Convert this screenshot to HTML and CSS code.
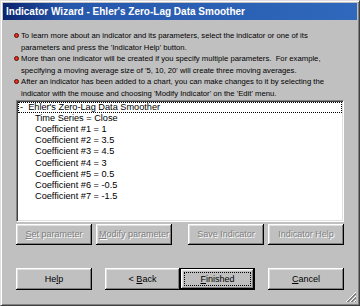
FILE: index.html
```html
<!DOCTYPE html>
<html lang="en">
<head>
    <meta charset="UTF-8">
    <meta name="viewport" content="width=device-width, initial-scale=1.0">
    <title>Indicator Wizard</title>
    <link rel="stylesheet" href="styles.css">
</head>
<body>
    <div class="window">
        <div class="titlebar">Indicator Wizard - Ehler's Zero-Lag Data Smoother</div>

        <div class="content">
            <ul class="notes">
                <li><span class="dot"></span><span>To learn more about an indicator and its parameters, select the indicator or one of its<br>parameters and press the 'Indicator Help' button.</span></li>
                <li><span class="dot"></span><span>More than one indicator will be created if you specify multiple parameters.&nbsp; For example,<br>specifying a moving average size of '5, 10, 20' will create three moving averages.</span></li>
                <li><span class="dot"></span><span>After an indicator has been added to a chart, you can make changes to it by selecting the<br>indicator with the mouse and choosing 'Modify Indicator' on the 'Edit' menu.</span></li>
            </ul>

            <div class="listbox">
                <div class="item sel">-&nbsp; Ehler's Zero-Lag Data Smoother</div>
                <div class="item sub">Time Series = Close</div>
                <div class="item sub">Coefficient #1 = 1</div>
                <div class="item sub">Coefficient #2 = 3.5</div>
                <div class="item sub">Coefficient #3 = 4.5</div>
                <div class="item sub">Coefficient #4 = 3</div>
                <div class="item sub">Coefficient #5 = 0.5</div>
                <div class="item sub">Coefficient #6 = -0.5</div>
                <div class="item sub">Coefficient #7 = -1.5</div>
            </div>

            <div class="row row-tools">
                <div class="group">
                    <button class="btn" disabled><u>S</u>et parameter</button>
                    <button class="btn" disabled><u>M</u>odify parameter</button>
                </div>
                <div class="group">
                    <button class="btn" disabled>Save Indicator</button>
                    <button class="btn" disabled>Indicator Help</button>
                </div>
            </div>

            <div class="row row-nav">
                <button class="btn">He<u>l</u>p</button>
                <div class="pair">
                    <button class="btn wide">&lt; <u>B</u>ack</button>
                    <button class="btn wide default"><u>F</u>inished</button>
                </div>
                <button class="btn"><u>C</u>ancel</button>
            </div>
        </div>

        <svg class="grip" width="12" height="12" viewBox="0 0 12 12">
            <path d="M11 1 L1 11 M11 5 L5 11 M11 9 L9 11" stroke="#fff" stroke-width="1"/>
            <path d="M11 2 L2 11 M11 3 L3 11 M11 6 L6 11 M11 7 L7 11 M11 10 L10 11" stroke="#808080" stroke-width="1"/>
        </svg>
    </div>
</body>
</html>
```

FILE: styles.css
```css
* {
    margin: 0;
    padding: 0;
    box-sizing: border-box;
}

body {
    font-family: 'Liberation Sans', Arial, sans-serif;
    background: #c0c0c0;
    color: #000;
}

/* window frame */
.window {
    position: relative;
    width: 360px;
    height: 306px;
    background: #c0c0c0;
    border: 1px solid;
    border-color: #dfdfdf #404040 #404040 #dfdfdf;
    box-shadow: inset 1px 1px #fff, inset -1px -1px #808080;
    padding: 2px;
}

.titlebar {
    height: 17px;
    line-height: 17px;
    padding-left: 3px;
    font-size: 10px;
    font-weight: bold;
    color: #fff;
    background: linear-gradient(90deg, #0a2470 0%, #2658ac 18%, #2f68bc 100%);
    white-space: nowrap;
}

.content {
    padding: 10px 13px 0 13px;
}

/* help notes */
.notes {
    list-style: none;
    font-size: 7.7px;
    line-height: 11.6px;
    white-space: nowrap;
}

.notes li {
    display: flex;
    align-items: flex-start;
}

.dot {
    flex: none;
    width: 5px;
    height: 5px;
    margin: 3px 2px 0 -2px;
    border-radius: 50%;
    background: #e8301c;
    border: 1px solid #5a1008;
}

/* list box */
.listbox {
    height: 122px;
    background: #fff;
    border: 1px solid;
    border-color: #808080 #fff #fff #808080;
    box-shadow: inset 1px 1px #404040, inset -1px -1px #dfdfdf;
    padding: 1px;
    font-size: 9.2px;
    line-height: 11.2px;
}

.item {
    white-space: nowrap;
    padding-left: 2px;
}

.item.sel {
    outline: 1px dotted #000;
    outline-offset: -1px;
}

.item.sub {
    padding-left: 17px;
}

/* buttons */
.row {
    display: flex;
    justify-content: space-between;
}

.row-tools {
    margin-top: 2px;
    height: 21px;
}

.row-nav {
    margin-top: 23px;
    height: 22px;
}

.group {
    display: flex;
    gap: 4px;
}

.pair {
    display: flex;
}

.btn {
    position: relative;
    width: 76px;
    height: 100%;
    font-family: 'Liberation Sans', Arial, sans-serif;
    font-size: 9px;
    color: #000;
    background: #c0c0c0;
    border: none;
    box-shadow: inset -1px -1px #000, inset 1px 1px #fff, inset -2px -2px #808080, inset 2px 2px #dfdfdf;
    white-space: nowrap;
}

.btn.wide {
    width: 75px;
}

.btn:disabled {
    color: #808080;
    text-shadow: 1px 1px #fff;
}

.btn.default {
    border: 1px solid #000;
}

.btn.default::after {
    content: "";
    position: absolute;
    inset: 3px;
    border: 1px dotted #000;
}

.grip {
    position: absolute;
    right: 2px;
    bottom: 2px;
}
```
